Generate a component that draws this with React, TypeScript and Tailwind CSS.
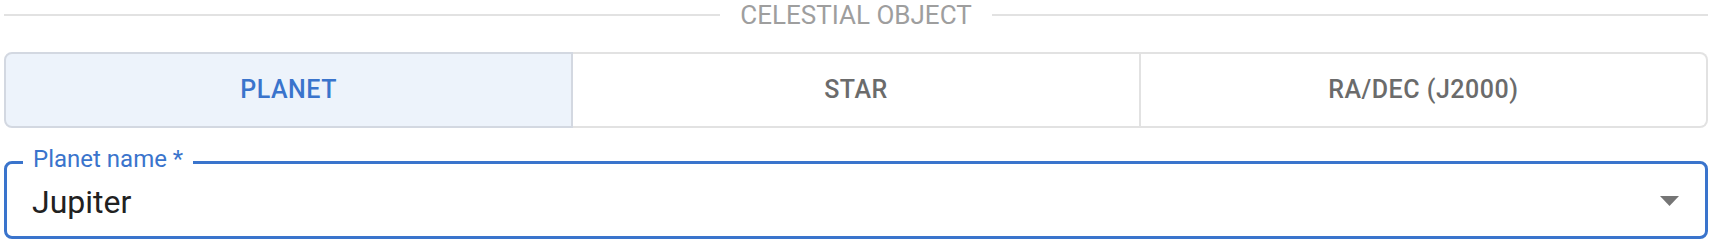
import React from "react";

const tabs = ["PLANET", "STAR", "RA/DEC (J2000)"];

export default function App() {
  const selected = 0;

  return (
    <div className="w-[1712px] bg-white px-[4px] pt-[1px] font-['Roboto',sans-serif]">
      <div className="flex h-[28px] items-center gap-[20px]">
        <div className="h-[2px] flex-1 bg-[#e2e2e2]" />
        <span className="text-[26px] leading-[28px] text-[#9e9e9e]">CELESTIAL OBJECT</span>
        <div className="h-[2px] flex-1 bg-[#e2e2e2]" />
      </div>

      <div className="mt-[23px] flex h-[76px]">
        {tabs.map((label, i) => (
          <button
            key={label}
            className={
              i === selected
                ? "flex flex-1 items-center justify-center rounded-l-[8px] border-2 border-[#d3d8e1] bg-[#edf3fb] text-[25px] font-medium tracking-[0.02em] text-[#3a74cc]"
                : i === tabs.length - 1
                  ? "flex flex-1 items-center justify-center rounded-r-[8px] border-y-2 border-r-2 border-[#e2e2e2] bg-white text-[25px] font-medium tracking-[0.02em] text-[#6b6b6b]"
                  : "flex flex-1 items-center justify-center border-y-2 border-r-2 border-[#e2e2e2] bg-white text-[25px] font-medium tracking-[0.02em] text-[#6b6b6b]"
            }
          >
            {label}
          </button>
        ))}
      </div>

      <div className="relative mt-[33px] flex h-[78px] items-center rounded-[8px] border-[3px] border-[#3a74cc] pt-[4px]">
        <span className="absolute -top-[17px] left-[16px] bg-white px-[10px] text-[24px] leading-[24px] text-[#3a74cc]">
          Planet name *
        </span>
        <span className="flex-1 pl-[25px] text-[32px] leading-[36px] text-[#212121]">Jupiter</span>
        <svg width="19" height="10" viewBox="0 0 19 10" className="mr-[26px] -mt-[2px]">
          <polygon points="0,0 19,0 9.5,10" fill="#757575" />
        </svg>
      </div>
    </div>
  );
}
